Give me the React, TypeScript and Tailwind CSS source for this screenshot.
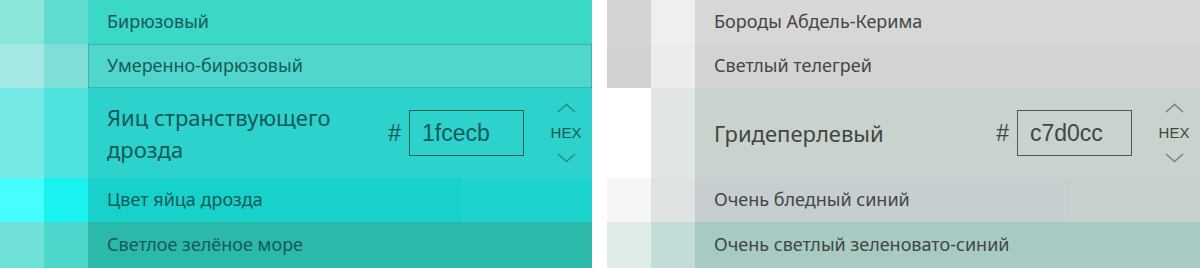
import React from "react";

type Row = {
  name: string;
  c1: string;
  c2: string;
  main: string;
  split?: string;
  big?: boolean;
  bordered?: string;
  hex?: string;
};

const leftRows: Row[] = [
  { name: "Бирюзовый", c1: "#8ce5d9", c2: "#60dccf", main: "#3bd8c7" },
  { name: "Умеренно-бирюзовый", c1: "#a3e8e2", c2: "#7fded8", main: "#50d6cd", bordered: "#3ab5ad" },
  { name: "Яиц странствующего дрозда", c1: "#75e9e5", c2: "#4fe3df", main: "#2cd2cb", big: true, hex: "1fcecb" },
  { name: "Цвет яйца дрозда", c1: "#46fefd", c2: "#1af2f0", main: "#19d1cb", split: "#1cd3cd" },
  { name: "Светлое зелёное море", c1: "#70e1d7", c2: "#4ed6cc", main: "#2bb9a9" },
];

const rightRows: Row[] = [
  { name: "Бороды Абдель-Керима", c1: "#d4d4d4", c2: "#efefef", main: "#d7d7d7" },
  { name: "Светлый телегрей", c1: "#d2d2d2", c2: "#ececec", main: "#d3d3d3" },
  { name: "Гридеперлевый", c1: "#ffffff", c2: "#e1e6e4", main: "#c9d3cd", big: true, hex: "c7d0cc" },
  { name: "Очень бледный синий", c1: "#f6f6f6", c2: "#dfe2e3", main: "#c7ced0", split: "#c9d0d0" },
  { name: "Очень светлый зеленовато-синий", c1: "#e0ece9", c2: "#c3dcd8", main: "#a7cac3" },
];

function Chevron({ up, color }: { up?: boolean; color: string }) {
  return (
    <svg width="19" height="10" viewBox="0 0 19 10" fill="none">
      <path
        d={up ? "M1 9 L9.5 1.5 L18 9" : "M1 1 L9.5 8.5 L18 1"}
        stroke={color}
        strokeWidth="1.4"
        fill="none"
      />
    </svg>
  );
}

function Panel({ rows, text, border, hexColor, wclass }: { rows: Row[]; text: string; border: string; hexColor: string; wclass: string }) {
  return (
    <div className={`flex flex-col ${wclass}`}>
      {rows.map((r, i) => (
        <div key={i} className={`flex ${r.big ? "h-[90px]" : i === 4 ? "h-[46px]" : "h-[44px]"}`}>
          <div className="w-[44px] shrink-0" style={{ background: r.c1 }} />
          <div className="w-[44px] shrink-0" style={{ background: r.c2 }} />
          <div
            className="relative flex-1 flex items-center pl-[19px] pr-[10px]"
            style={{
              background: r.split
                ? `linear-gradient(to right, ${r.main} 0, ${r.main} 74%, ${r.split} 74%)`
                : r.main,
              boxShadow: r.bordered ? `inset 0 0 0 1px ${r.bordered}` : undefined,
              color: text,
            }}
          >
            {r.big ? (
              <>
                <div className="flex-1 text-[22px] leading-[32px] max-w-[250px] pb-[1px]">{r.name}</div>
                <div className="ml-auto flex items-center">
                  <span className="font-['Liberation_Sans'] text-[23px] mr-[8px]" style={{ color: text }}>#</span>
                  <div
                    className="w-[115px] h-[46px] border-[1.5px] flex items-center pl-[12px] font-['Liberation_Sans'] text-[23px]"
                    style={{ borderColor: border, color: text }}
                  >
                    {r.hex}
                  </div>
                  <div className="flex flex-col items-center ml-[26px] w-[32px]">
                    <Chevron up color={hexColor} />
                    <span className="font-['Liberation_Sans'] text-[15px] leading-[16px] my-[12px]" style={{ color: text }}>HEX</span>
                    <Chevron color={hexColor} />
                  </div>
                </div>
              </>
            ) : (
              <span className="text-[18px] pb-[1px]">{r.name}</span>
            )}
          </div>
        </div>
      ))}
    </div>
  );
}

export default function App() {
  return (
    <div className="w-[1200px] h-[268px] bg-white flex overflow-hidden font-['Noto_Sans',sans-serif]">
      <Panel rows={leftRows} text="#155a56" border="#16625d" hexColor="#2a8a85" wclass="w-[592px]" />
      <div className="w-[15px] shrink-0" />
      <Panel rows={rightRows} text="#424644" border="#4f5552" hexColor="#7a807d" wclass="w-[593px]" />
    </div>
  );
}
